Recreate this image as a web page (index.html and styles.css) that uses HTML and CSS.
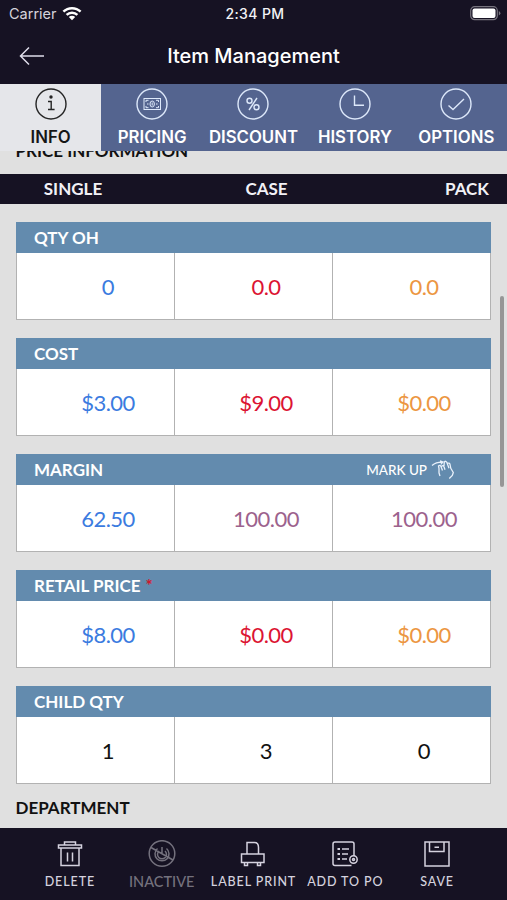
FILE: index.html
```html
<!DOCTYPE html>
<html lang="en">
<head>
    <meta charset="UTF-8">
    <meta name="viewport" content="width=device-width, initial-scale=1.0">
    <title>Item Management</title>
    <link rel="stylesheet" href="styles.css">
</head>
<body>
    <div class="status-bar">
        <div class="carrier">
            <span>Carrier</span>
            <svg class="wifi" width="20" height="15" viewBox="0 0 20 15">
                <path d="M1.4 5.6a12.4 12.4 0 0 1 17.2 0M4.6 8.8a7.8 7.8 0 0 1 10.8 0" fill="none" stroke="#fff" stroke-width="2.5"/>
                <path d="M6.8 11.1a4.6 4.6 0 0 1 6.4 0L10 14.3z" fill="#fff"/>
            </svg>
        </div>
        <div class="time">2:34 PM</div>
        <svg class="battery" width="31" height="15" viewBox="0 0 31 15">
            <rect x=".7" y=".7" width="26.6" height="13" rx="4" fill="none" stroke="#77747e" stroke-width="1.2"/>
            <rect x="2.5" y="2.5" width="23" height="9.5" rx="2" fill="#fff"/>
            <path d="M28.8 5v4.5q1.6-.6 1.6-2.2T28.8 5z" fill="#77747e"/>
        </svg>
    </div>
    <header class="title-bar">
        <svg class="back" width="26" height="20" viewBox="0 0 26 20">
            <path d="M10 1.5 1.5 10l8.5 8.5M1.5 10H25" fill="none" stroke="#deddea" stroke-width="1.5"/>
        </svg>
        <h1>Item Management</h1>
    </header>
    <nav class="tabs">
        <div class="tab active">
            <svg width="32" height="32" viewBox="0 0 32 32">
                <circle cx="16" cy="16" r="15"/>
                <path d="M13 13.5h3.2v7.8M13 21.5h6.6"/>
                <circle class="dot" cx="16" cy="9" r="1.7"/>
            </svg>
            <span>INFO</span>
        </div>
        <div class="tab">
            <svg width="32" height="32" viewBox="0 0 32 32">
                <circle cx="16" cy="16" r="15"/>
                <g class="thin">
                    <rect x="8" y="10.5" width="16.5" height="11"/>
                    <path d="M10 14v-1.7h2.5M20 12.3h2.5V14M10 18v1.7h2.5M20 19.7h2.5V18M11 16h1.5M20 16h1.5"/>
                    <ellipse cx="16.2" cy="16" rx="2.2" ry="3"/>
                    <path d="M16.2 14.5v3"/>
                </g>
            </svg>
            <span>PRICING</span>
        </div>
        <div class="tab">
            <svg width="32" height="32" viewBox="0 0 32 32">
                <circle cx="16" cy="16" r="15"/>
                <circle cx="12.5" cy="12.7" r="2.5"/>
                <circle cx="19.5" cy="19.3" r="2.5"/>
                <path d="M20 10 12 22"/>
            </svg>
            <span>DISCOUNT</span>
        </div>
        <div class="tab">
            <svg width="32" height="32" viewBox="0 0 32 32">
                <circle cx="16" cy="16" r="15"/>
                <path d="M15.5 7.5v9.8H25"/>
            </svg>
            <span>HISTORY</span>
        </div>
        <div class="tab">
            <svg width="32" height="32" viewBox="0 0 32 32">
                <circle cx="16" cy="16" r="15"/>
                <path d="M8.5 17.5 13 21.5 24 11"/>
            </svg>
            <span>OPTIONS</span>
        </div>
    </nav>
    <main class="content">
        <h2 class="section-title price-title">PRICE INFORMATION</h2>
        <div class="columns">
            <span>SINGLE</span>
            <span>CASE</span>
            <span>PACK</span>
        </div>
        <section class="card">
            <div class="card-head">QTY OH</div>
            <div class="cells">
                <div class="blue">0</div>
                <div class="red">0.0</div>
                <div class="orange">0.0</div>
            </div>
        </section>
        <section class="card">
            <div class="card-head">COST</div>
            <div class="cells">
                <div class="blue">$3.00</div>
                <div class="red">$9.00</div>
                <div class="orange">$0.00</div>
            </div>
        </section>
        <section class="card">
            <div class="card-head">
                MARGIN
                <div class="mark-up">
                    <span>MARK UP</span>
                    <svg width="24" height="20" viewBox="0 0 24 20">
                        <path d="M1 5.5C4 3 7 2.2 11 2.2M9 .8l3 1.3-2.2 2.3"/>
                        <path d="M9 16 8 13V8.5L7.5 6q1.5-1.5 2.5.5l1.500 4M10.500 6.500q1.500-1.700 2.500.3l1 3M13 6l.3-4q1.500-1.600 2.500.3l2.200 6M16.300 3.500q2-1.200 2.700.8l.8 4 2.500 4.200-1 3-3 3"/>
                    </svg>
                </div>
            </div>
            <div class="cells">
                <div class="blue">62.50</div>
                <div class="purple">100.00</div>
                <div class="purple">100.00</div>
            </div>
        </section>
        <section class="card">
            <div class="card-head">RETAIL PRICE <span class="required">*</span></div>
            <div class="cells">
                <div class="blue">$8.00</div>
                <div class="red">$0.00</div>
                <div class="orange">$0.00</div>
            </div>
        </section>
        <section class="card">
            <div class="card-head">CHILD QTY</div>
            <div class="cells">
                <div>1</div>
                <div>3</div>
                <div>0</div>
            </div>
        </section>
        <h2 class="section-title department-title">DEPARTMENT</h2>
        <div class="scrollbar"></div>
    </main>
    <footer class="toolbar">
        <div class="tool">
            <svg width="28" height="28" viewBox="0 0 28 28">
                <path d="M2.5 5h23v3h-23zM8.5 5V2h11v3M5 8v17.5h18V8M11.5 12.5v9M16.5 12.5v9"/>
            </svg>
            <span>DELETE</span>
        </div>
        <div class="tool disabled">
            <svg width="28" height="28" viewBox="0 0 28 28">
                <circle cx="14" cy="13.5" r="12.8"/>
                <path d="M3 7.5 25 20M9.500 8.500a7 7 0 1 0 9 0M11 11a4.500 4.500 0 1 0 6 0M14 7v6"/>
            </svg>
            <span>INACTIVE</span>
        </div>
        <div class="tool">
            <svg width="28" height="28" viewBox="0 0 28 28">
                <path d="M8 14V2.5h7.5q4 0 4 5V14M2.5 14H25v8.5H2.500zM5.500 22.500v3h3v-3M18.500 22.500v3h3v-3"/>
            </svg>
            <span>LABEL PRINT</span>
        </div>
        <div class="tool">
            <svg width="28" height="28" viewBox="0 0 28 28">
                <path d="M20.5 25.5H4q-2 0-2-2V4q0-2 2-2h17q2 0 2 2v12M11 9h7M11 14h6M11 19h5"/>
                <path class="bullets" d="M6.5 9H9M6.5 14H9M6.5 19H9"/>
                <circle cx="22.5" cy="19.5" r="3.7"/>
                <circle cx="22.5" cy="19.5" r="1"/>
            </svg>
            <span>ADD TO PO</span>
        </div>
        <div class="tool">
            <svg width="28" height="28" viewBox="0 0 28 28">
                <path d="M2 2h24v24H2zM6.5 2v9.5H21V2M11.5 7.2H16"/>
            </svg>
            <span>SAVE</span>
        </div>
    </footer>
</body>
</html>
```
FILE: styles.css
```css
* {
    box-sizing: border-box;
}
body {
    display: flex;
    flex-direction: column;
    height: 900px;
    margin: 0;
    overflow: hidden;
    background-color: #e0e0e0;
    font-family: Lato, sans-serif;
    color: #111;
}
h1, h2 {
    margin: 0;
}
.status-bar {
    display: grid;
    grid-template-columns: 1fr auto 1fr;
    align-items: center;
    height: 28px;
    padding: 0 6px 2px 9px;
    background-color: #161223;
    color: #f3f2f6;
    font: 500 14px Inter, sans-serif;
}
.carrier {
    display: flex;
    align-items: center;
    gap: 5px;
    font-weight: 400;
    font-size: 14.5px;
    color: #d5d3db;
}
.time {
    letter-spacing: 0.4px;
}
.battery {
    justify-self: end;
}
.title-bar {
    display: grid;
    grid-template-columns: 60px 1fr 60px;
    align-items: center;
    height: 56px;
    padding-bottom: 1px;
    background-color: #161223;
    color: #fff;
}
.back {
    margin-left: 19px;
}
.title-bar h1 {
    font: 500 20px Inter, sans-serif;
    text-align: center;
}
.tabs {
    display: grid;
    grid-template-columns: repeat(5, 1fr);
    height: 67px;
    background-color: #54648f;
    color: #fff;
}
.tab {
    display: flex;
    flex-direction: column;
    align-items: center;
    padding-top: 4px;
    font: 600 16.8px/22px Inter, sans-serif;
}
.tab span {
    margin-top: 6px;
}
.tab.active {
    background-color: #e5e6ea;
    color: #161616;
}
.tab svg {
    fill: none;
    stroke: #dde8fa;
    stroke-width: 1.4;
}
.tab.active svg {
    stroke: #242424;
}
.tab .thin {
    stroke-width: 1;
}
.tab .dot {
    fill: #242424;
    stroke: none;
}
.content {
    position: relative;
    flex: 1;
    overflow: hidden;
}
.section-title {
    padding-left: 15.5px;
    font-size: 17px;
    font-weight: 700;
    line-height: 20px;
}
.price-title {
    margin: -10px 0 13px;
}
.department-title {
    margin-top: -4px;
}
.columns {
    display: grid;
    grid-template-columns: 146px 1fr 146px;
    align-items: center;
    height: 30px;
    margin-bottom: 18px;
    padding-bottom: 1px;
    background-color: #161223;
    color: #f2f1f6;
    font-size: 17px;
    font-weight: 700;
    text-align: center;
}
.columns span:nth-child(2) {
    padding-left: 26px;
}
.columns span:last-child {
    padding-right: 18px;
    text-align: right;
}
.card {
    height: 98px;
    margin: 0 16px 18px;
    border: 1px solid #b2b2b2;
    border-top: 0;
    background-color: #fff;
}
.card-head {
    display: flex;
    align-items: center;
    height: 31px;
    margin: 0 -1px;
    padding-left: 18px;
    background-color: #638bae;
    color: #fff;
    font-size: 17px;
    font-weight: 700;
}
.required {
    margin-left: 5px;
    color: #d3162b;
}
.mark-up {
    display: flex;
    align-items: center;
    gap: 4px;
    margin-left: auto;
    padding-right: 36px;
    font-size: 13.5px;
    font-weight: 500;
}
.mark-up svg {
    fill: none;
    stroke: #e9f1fb;
    stroke-width: 1.3;
}
.cells {
    display: grid;
    grid-template-columns: 158px 158px 1fr;
    height: 66px;
}
.cells div {
    display: flex;
    align-items: center;
    justify-content: center;
    padding-left: 25px;
    border-right: 1px solid #b2b2b2;
    font-size: 22px;
    letter-spacing: -0.5px;
}
.cells div:last-child {
    border-right: 0;
}
.cells .blue {
    color: #3b7be0;
}
.cells .red {
    color: #dc1433;
}
.cells .orange {
    color: #ec9642;
}
.cells .purple {
    color: #9c628d;
}
.scrollbar {
    position: absolute;
    top: 145px;
    right: 3px;
    width: 4px;
    height: 191px;
    border-radius: 2px;
    background-color: #969696;
}
.toolbar {
    display: grid;
    grid-template-columns: repeat(5, 1fr);
    height: 72px;
    padding: 0 24px;
    background-color: #161223;
    color: #d5d2df;
}
.tool {
    display: flex;
    flex-direction: column;
    align-items: center;
    gap: 6px;
    padding-top: 12px;
    font-size: 12.5px;
    font-weight: 500;
    letter-spacing: 0.9px;
    line-height: 16px;
    white-space: nowrap;
}
.tool svg {
    fill: none;
    stroke: #d5d2df;
    stroke-width: 1.5;
}
.tool .bullets {
    stroke-width: 2;
}
.tool.disabled {
    color: #74717d;
    font-size: 14.5px;
    letter-spacing: 0;
}
.tool.disabled svg {
    stroke: #74717d;
}
```
